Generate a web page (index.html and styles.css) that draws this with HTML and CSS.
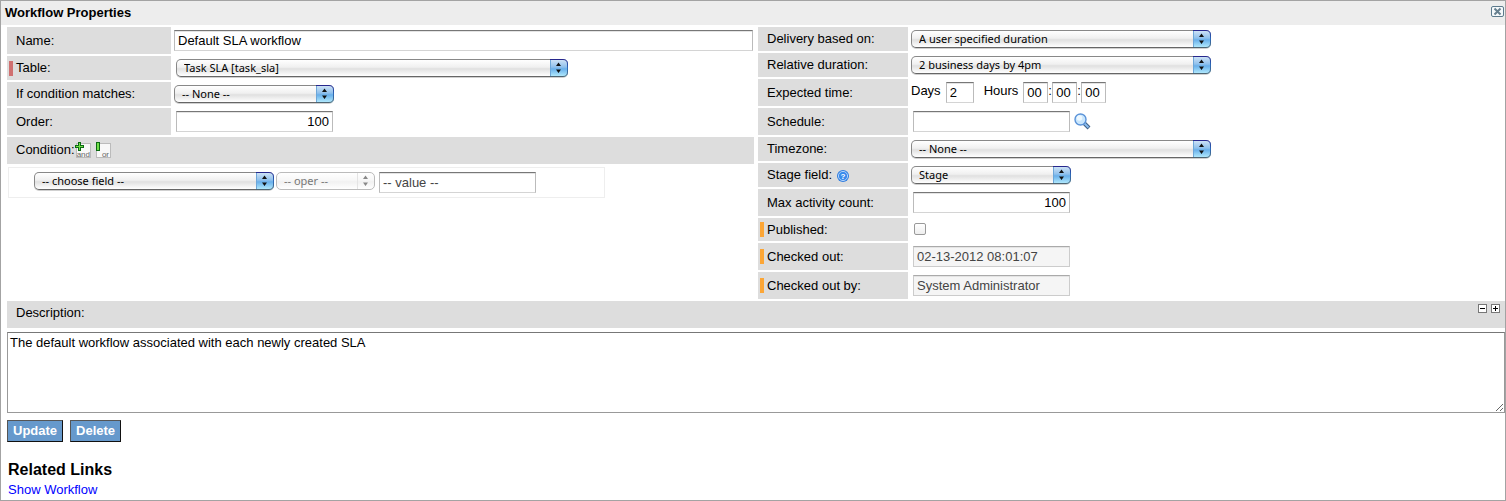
FILE: index.html
```html
<!DOCTYPE html>
<html lang="en">
<head>
<meta charset="utf-8">
<title>Workflow Properties</title>
<link rel="stylesheet" href="styles.css">
</head>
<body>
<svg class="symbols" aria-hidden="true">
  <defs>
    <linearGradient id="cap-fill" x1="0" y1="0" x2="0" y2="1">
      <stop offset="0" stop-color="#d5e6f7"/>
      <stop offset=".45" stop-color="#8fc0ec"/>
      <stop offset=".55" stop-color="#68afea"/>
      <stop offset="1" stop-color="#b9f0ff"/>
    </linearGradient>
    <linearGradient id="cap-edge" x1="0" y1="0" x2="0" y2="1">
      <stop offset="0" stop-color="#27278c"/>
      <stop offset=".5" stop-color="#2c6cba"/>
      <stop offset="1" stop-color="#4e6472"/>
    </linearGradient>
    <symbol id="cap" viewBox="0 0 18 18">
      <path d="M0 0H13Q18 0 18 5V13Q18 18 13 18H0Z" fill="url(#cap-fill)"/>
      <path d="M0 .5H13Q17.500 .5 17.500 5V13Q17.500 17.500 13 17.500H0" fill="none" stroke="url(#cap-edge)"/>
      <path d="M.5 1V17" stroke="#6da6d8"/>
      <path d="M6 7L8.500 3.500L11 7ZM6 10.500L8.500 14L11 10.500Z" fill="#111"/>
    </symbol>
    <symbol id="cap-off" viewBox="0 0 18 18">
      <path d="M.5 1V17" stroke="#e4e4e4"/>
      <path d="M6 7L8.500 3.500L11 7ZM6 10.500L8.500 14L11 10.500Z" fill="#888"/>
    </symbol>
  </defs>
</svg>
<main class="panel">
  <header class="titlebar">
    <h1 class="title">Workflow Properties</h1>
    <button class="icon-button close" type="button" aria-label="Close">
      <svg width="13" height="11" viewBox="0 0 13 11"><rect x=".5" y=".5" width="12" height="10" rx="1.500" fill="#f5f9fb" stroke="#5c7a8c"/><path d="M3.500 2.500L9.500 8.500M9.500 2.500L3.500 8.500" stroke="#667f8e" stroke-width="2"/></svg>
    </button>
  </header>
  <form class="form">
    <div class="columns">
      <div class="column">
        <div class="row tall">
          <label class="label" for="name">Name:</label>
          <div class="field"><input class="text grow" id="name" type="text" value="Default SLA workflow"></div>
        </div>
        <div class="row">
          <label class="label required" for="table">Table:</label>
          <div class="field inset"><span class="select extra"><select id="table"><option>Task SLA [task_sla]</option></select><svg class="cap"><use href="#cap"/></svg></span></div>
        </div>
        <div class="row">
          <label class="label" for="matches">If condition matches:</label>
          <div class="field"><span class="select small"><select id="matches"><option>-- None --</option></select><svg class="cap"><use href="#cap"/></svg></span></div>
        </div>
        <div class="row tall">
          <label class="label" for="order">Order:</label>
          <div class="field inset"><input class="text number" id="order" type="text" value="100"></div>
        </div>
        <div class="band">
          <span>Condition:</span>
          <button class="icon-button" type="button" aria-label="Add and condition">
            <svg width="16" height="16" viewBox="0 0 16 16"><rect x="1.500" y="1.500" width="14" height="14" fill="#f8f8f8" stroke="#bbb"/><text class="glyph" x="15" y="15">and</text><path d="M3 0H6V3H9V6H6V9H3V6H0V3H3Z" fill="#0b6b12"/><path d="M4 1H5V4H8V5H5V8H4V5H1V4H4Z" fill="#73df4a"/></svg>
          </button>
          <button class="icon-button" type="button" aria-label="Add or condition">
            <svg width="16" height="16" viewBox="0 0 16 16"><rect x="1.500" y="1.500" width="14" height="14" fill="#f8f8f8" stroke="#bbb"/><text class="glyph" x="14" y="15">or</text><path d="M1 0H5V9H1Z" fill="#0b6b12"/><path d="M2 1H4V8H2Z" fill="#73df4a"/></svg>
          </button>
        </div>
        <div class="condition">
          <span class="select medium"><select aria-label="Field"><option>-- choose field --</option></select><svg class="cap"><use href="#cap"/></svg></span>
          <span class="select tiny"><select aria-label="Operator" disabled><option>-- oper --</option></select><svg class="cap"><use href="#cap-off"/></svg></span>
          <input class="text muted" type="text" aria-label="Value" value="-- value --">
        </div>
      </div>
      <div class="column narrow">
        <div class="row">
          <label class="label" for="delivery">Delivery based on:</label>
          <div class="field"><span class="select wide"><select id="delivery"><option>A user specified duration</option></select><svg class="cap"><use href="#cap"/></svg></span></div>
        </div>
        <div class="row">
          <label class="label" for="relative">Relative duration:</label>
          <div class="field"><span class="select wide"><select id="relative"><option>2 business days by 4pm</option></select><svg class="cap"><use href="#cap"/></svg></span></div>
        </div>
        <div class="row tall">
          <span class="label">Expected time:</span>
          <div class="field time">
            <label class="days" for="days">Days</label><input class="text day" id="days" type="text" value="2">
            <label class="hours" for="hours">Hours</label><input class="text unit" id="hours" type="text" value="00"><span class="colon">:</span><input class="text unit" type="text" aria-label="Minutes" value="00"><span class="colon">:</span><input class="text unit" type="text" aria-label="Seconds" value="00">
          </div>
        </div>
        <div class="row tall">
          <label class="label" for="schedule">Schedule:</label>
          <div class="field inset"><input class="text" id="schedule" type="text">
            <button class="icon-button lookup" type="button" aria-label="Look up schedule">
              <svg width="17" height="17" viewBox="0 0 17 17"><path d="M10 10L15 15" stroke="#3d5f86" stroke-width="4"/><path d="M10 10L14.500 14.500" stroke="#8abcf0" stroke-width="2"/><circle cx="6.500" cy="6.500" r="5.500" fill="#c9e6fd" stroke="#5b93d8" stroke-width="1.400"/><circle cx="5.500" cy="5" r="2.800" fill="#edf8ff"/></svg>
            </button>
          </div>
        </div>
        <div class="row">
          <label class="label" for="timezone">Timezone:</label>
          <div class="field"><span class="select wide"><select id="timezone"><option>-- None --</option></select><svg class="cap"><use href="#cap"/></svg></span></div>
        </div>
        <div class="row">
          <div class="label"><label for="stage">Stage field:</label>
            <svg class="help" width="12" height="12" viewBox="0 0 12 12" role="img" aria-label="Help"><circle cx="6" cy="6" r="6" fill="#2f7de0"/><circle cx="6" cy="6" r="4.600" fill="#3a8bec" stroke="#cfe5ff" stroke-width=".8"/><text class="mark" x="6" y="9">?</text></svg>
          </div>
          <div class="field"><span class="select small"><select id="stage"><option>Stage</option></select><svg class="cap"><use href="#cap"/></svg></span></div>
        </div>
        <div class="row tall">
          <label class="label" for="max">Max activity count:</label>
          <div class="field inset"><input class="text number" id="max" type="text" value="100"></div>
        </div>
        <div class="row short">
          <label class="label tracked" for="published">Published:</label>
          <div class="field inset"><input class="check" id="published" type="checkbox"></div>
        </div>
        <div class="row tall">
          <label class="label tracked" for="checked-out">Checked out:</label>
          <div class="field inset"><input class="text locked" id="checked-out" type="text" readonly value="02-13-2012 08:01:07"></div>
        </div>
        <div class="row tall">
          <label class="label tracked" for="checked-by">Checked out by:</label>
          <div class="field inset"><input class="text locked" id="checked-by" type="text" readonly value="System Administrator"></div>
        </div>
      </div>
    </div>
    <div class="band description">
      <label for="description">Description:</label>
      <div class="sizers">
        <button class="icon-button" type="button" aria-label="Shrink"><svg width="9" height="9" viewBox="0 0 9 9"><rect x=".5" y=".5" width="8" height="8" fill="#fff" stroke="#777"/><path d="M2 4.500H7" stroke="#000"/></svg></button>
        <button class="icon-button" type="button" aria-label="Expand"><svg width="9" height="9" viewBox="0 0 9 9"><rect x=".5" y=".5" width="8" height="8" fill="#fff" stroke="#777"/><path d="M2 4.500H7M4.500 2V7" stroke="#000"/></svg></button>
      </div>
    </div>
    <textarea class="area" id="description" rows="5">The default workflow associated with each newly created SLA</textarea>
    <div class="actions">
      <button class="action" type="button">Update</button>
      <button class="action" type="button">Delete</button>
    </div>
  </form>
  <section class="related">
    <h2 class="subtitle">Related Links</h2>
    <a class="link" href="#">Show Workflow</a>
  </section>
</main>
</body>
</html>
```
FILE: styles.css
```css
* { box-sizing: border-box; }

body {
  margin: 0;
  background: #fff;
  color: #000;
  font: 13px/16px "Liberation Sans", Arial, sans-serif;
}

input, select, button, textarea {
  margin: 0;
  font: inherit;
  color: inherit;
}

.symbols { position: absolute; width: 0; height: 0; }

.panel {
  display: flex;
  flex-direction: column;
  min-height: 100vh;
  border: 1px solid #a3a3a3;
}

.titlebar {
  display: flex;
  align-items: center;
  justify-content: space-between;
  height: 24px;
  padding: 0 1px 0 4px;
  background: #ededed;
}

.title { margin: 0; font-size: 13px; }

.icon-button {
  display: flex;
  padding: 0;
  border: 0;
  background: none;
}

.close { margin-bottom: 3px; }

.glyph {
  fill: #666;
  font-size: 8px;
  text-anchor: end;
}

.mark {
  fill: #fff;
  font-size: 8px;
  font-weight: bold;
  text-anchor: middle;
}

.form { padding: 2px 0 0 6px; }

.columns {
  display: grid;
  grid-template-columns: 1fr 1fr;
  gap: 4px;
}

.column {
  display: flex;
  flex-direction: column;
  gap: 2px;
}

.row {
  display: grid;
  grid-template-columns: 164px 1fr;
  min-height: 24px;
}

.narrow .row { grid-template-columns: 150px 1fr; }
.row.tall { min-height: 27px; }
.row.short { min-height: 23px; }

.label {
  display: flex;
  align-items: center;
  gap: 5px;
  padding-left: 9px;
  background: #ddd;
}

.required, .tracked { gap: 3px; padding-left: 2px; }

.required::before, .tracked::before {
  content: "";
  width: 4px;
  height: 15px;
  background: #d07070;
}

.tracked::before { background: #fca636; }

.help { margin-top: 2px; }

.field {
  display: flex;
  align-items: center;
  padding: 0 1px 0 3px;
}

.field.inset { padding-left: 5px; }

.text {
  width: 157px;
  height: 21px;
  padding: 0 3px;
  border: 1px solid #bbb;
  border-top-color: #777;
  border-bottom-color: #d4d4d4;
  background: #fff;
  box-shadow: inset 0 1px #e4e4e4;
}

.text.grow { flex: 1; }
.text.number { text-align: right; }
.text.muted { color: #444; }

.text.locked {
  border-color: #ccc;
  border-top-color: #aaa;
  background: #f5f5f5;
  color: #444;
}

.time { align-items: flex-start; padding-top: 3px; line-height: 18px; }
.days { margin-right: 5px; }
.hours { margin: 0 5px 0 10px; }
.text.day { width: 28px; }
.text.unit { width: 25px; }
.colon { width: 4px; }

.lookup { margin-left: 4px; }

.select { position: relative; display: flex; height: 18px; }
.select.tiny { width: 99px; }
.select.small { width: 160px; }
.select.medium { width: 240px; }
.select.wide { width: 300px; }
.select.extra { width: 392px; }

.select select {
  appearance: none;
  width: 100%;
  height: 18px;
  padding: 0 20px 0 7px;
  border: 1px solid #888;
  border-bottom-color: #666;
  border-radius: 5px;
  background: linear-gradient(#fff, #f0f0f0 45%, #e0e0e0 55%, #fff);
  box-shadow: 0 1px #d0d0d0;
  font: 11px/14px "Noto Sans", "Open Sans", sans-serif;
}

.select select:disabled {
  border-color: #bbb;
  background: linear-gradient(#fff, #f7f7f7 45%, #f1f1f1 55%, #fff);
  box-shadow: none;
  color: #777;
  opacity: 1;
}

.cap {
  position: absolute;
  top: 0;
  right: 0;
  width: 18px;
  height: 18px;
  pointer-events: none;
}

.check {
  appearance: none;
  width: 12px;
  height: 12px;
  margin: 0 1px 2px;
  border: 1px solid #999;
  border-radius: 2px;
  background: linear-gradient(#fff, #eee);
}

.band {
  display: flex;
  align-items: center;
  gap: 4px;
  height: 27px;
  padding: 0 5px 2px 9px;
  background: #ddd;
}

.band span { margin-right: -4px; }

.condition {
  display: flex;
  align-items: flex-start;
  width: 597px;
  max-width: 100%;
  height: 31px;
  margin: 1px;
  padding: 4px 0 0 25px;
  border: 1px solid #eee;
}

.condition .tiny { margin: 0 4px 0 2px; }

.band.description {
  align-items: flex-start;
  justify-content: space-between;
  margin-top: 2px;
  padding-top: 3px;
}

.description label { line-height: 18px; }
.sizers { display: flex; gap: 4px; }

.area {
  display: block;
  width: 100%;
  height: 81px;
  margin-top: 4px;
  padding: 2px;
  border: 1px solid #999;
  border-top-color: #777;
  resize: vertical;
}

.actions { display: flex; gap: 7px; padding-top: 7px; }

.action {
  height: 22px;
  padding: 0 5px;
  border: 1px solid #111;
  border-top-color: #555;
  border-left-color: #555;
  background: #69c;
  color: #fff;
  font-weight: bold;
}

.related { padding: 18px 7px 0; }

.subtitle { margin: 0; font-size: 16px; line-height: 20px; }

.link { color: #00f; line-height: 20px; text-decoration: none; }
```
